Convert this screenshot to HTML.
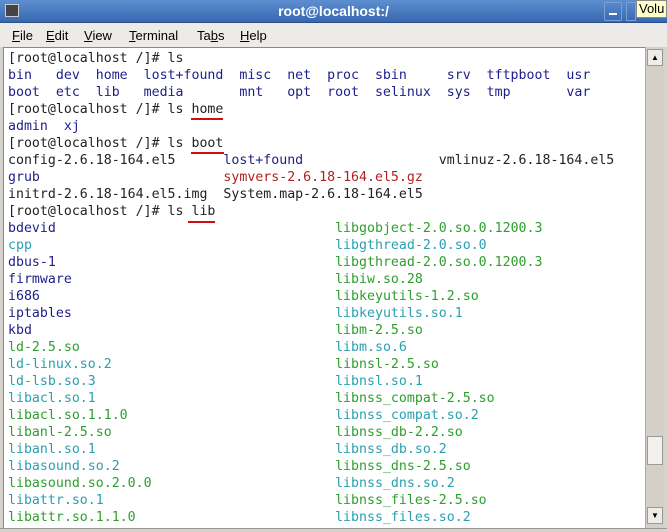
<!DOCTYPE html>
<html><head><meta charset="utf-8"><style>
*{margin:0;padding:0;box-sizing:border-box}
body{width:667px;height:532px;overflow:hidden;background:#d6d3ce;position:relative;font-family:"Liberation Sans",sans-serif}
#title{position:absolute;left:0;top:0;width:667px;height:23px;background:linear-gradient(#5d8fd0,#3767b0);border-bottom:1px solid #2a4f8a}
#title .t{position:absolute;left:0;right:0;top:3px;text-align:center;color:#fff;font-weight:bold;font-size:14px}
#menu{position:absolute;left:0;top:23px;width:667px;height:24px;background:#edebe7;font-size:13px;color:#000}
#menu span{position:absolute;top:5px}
#term{position:absolute;left:3px;top:47px;width:642px;height:481px;background:#fff;border-left:1px solid #888;border-top:1px solid #888}
.l{position:absolute;left:4px;height:17px;line-height:17px;font-family:"DejaVu Sans Mono",monospace;font-size:13.25px;white-space:pre;color:#222}
.b{color:#1e1e8a}.c{color:#2aa0b0}.g{color:#2e9e2e}.r{color:#b02020}
.u{position:absolute;height:2px;background:#d01010}
#sb{position:absolute;left:645px;top:47px;width:19px;height:481px;background:#d4d0c8;border-left:1px solid #aaa}
#bot{position:absolute;left:0;top:528px;width:667px;height:4px;background:#d6d3ce;border-top:1px solid #999}
</style></head><body>
<div id="title">
<div style="position:absolute;left:5px;top:4px;width:14px;height:13px;background:#444;border:1px solid #ccc"></div>
<div class="t">root@localhost:/</div>
<div style="position:absolute;left:604px;top:2px;width:18px;height:19px;border:1px solid #7aa0d8;border-radius:2px"></div>
<div style="position:absolute;left:609px;top:13px;width:8px;height:2px;background:#fff"></div>
<div style="position:absolute;left:626px;top:2px;width:10px;height:19px;border:1px solid #7aa0d8"></div>
<div style="position:absolute;left:636px;top:0;width:31px;height:18px;background:#ffffc8;border:1px solid #888;font-size:13px;padding-left:2px;line-height:16px">Volu</div>
</div>
<div id="menu">
<span style="left:12px"><u>F</u>ile</span><span style="left:46px"><u>E</u>dit</span><span style="left:84px"><u>V</u>iew</span><span style="left:129px"><u>T</u>erminal</span><span style="left:197px">Ta<u>b</u>s</span><span style="left:240px"><u>H</u>elp</span>
</div>
<div id="term">
<div class="l" style="top:2px">[root@localhost /]# ls</div>
<div class="l b" style="top:19px">bin   dev  home  lost+found  misc  net  proc  sbin     srv  tftpboot  usr</div>
<div class="l b" style="top:36px">boot  etc  lib   media       mnt   opt  root  selinux  sys  tmp       var</div>
<div class="l" style="top:53px">[root@localhost /]# ls home</div>
<div class="l b" style="top:70px">admin  xj</div>
<div class="l" style="top:87px">[root@localhost /]# ls boot</div>
<div class="l" style="top:104px">config-2.6.18-164.el5      <span class="b">lost+found</span>                 vmlinuz-2.6.18-164.el5</div>
<div class="l" style="top:121px"><span class="b">grub</span>                       <span class="r">symvers-2.6.18-164.el5.gz</span></div>
<div class="l" style="top:138px">initrd-2.6.18-164.el5.img  System.map-2.6.18-164.el5</div>
<div class="l" style="top:155px">[root@localhost /]# ls lib</div>
<div class="l" style="top:172px"><span class="b">bdevid</span>                                   <span class="g">libgobject-2.0.so.0.1200.3</span></div>
<div class="l" style="top:189px"><span class="c">cpp</span>                                      <span class="c">libgthread-2.0.so.0</span></div>
<div class="l" style="top:206px"><span class="b">dbus-1</span>                                   <span class="g">libgthread-2.0.so.0.1200.3</span></div>
<div class="l" style="top:223px"><span class="b">firmware</span>                                 <span class="g">libiw.so.28</span></div>
<div class="l" style="top:240px"><span class="b">i686</span>                                     <span class="g">libkeyutils-1.2.so</span></div>
<div class="l" style="top:257px"><span class="b">iptables</span>                                 <span class="c">libkeyutils.so.1</span></div>
<div class="l" style="top:274px"><span class="b">kbd</span>                                      <span class="g">libm-2.5.so</span></div>
<div class="l" style="top:291px"><span class="g">ld-2.5.so</span>                                <span class="c">libm.so.6</span></div>
<div class="l" style="top:308px"><span class="c">ld-linux.so.2</span>                            <span class="g">libnsl-2.5.so</span></div>
<div class="l" style="top:325px"><span class="c">ld-lsb.so.3</span>                              <span class="c">libnsl.so.1</span></div>
<div class="l" style="top:342px"><span class="c">libacl.so.1</span>                              <span class="g">libnss_compat-2.5.so</span></div>
<div class="l" style="top:359px"><span class="g">libacl.so.1.1.0</span>                          <span class="c">libnss_compat.so.2</span></div>
<div class="l" style="top:376px"><span class="g">libanl-2.5.so</span>                            <span class="g">libnss_db-2.2.so</span></div>
<div class="l" style="top:393px"><span class="c">libanl.so.1</span>                              <span class="c">libnss_db.so.2</span></div>
<div class="l" style="top:410px"><span class="c">libasound.so.2</span>                           <span class="g">libnss_dns-2.5.so</span></div>
<div class="l" style="top:427px"><span class="g">libasound.so.2.0.0</span>                       <span class="c">libnss_dns.so.2</span></div>
<div class="l" style="top:444px"><span class="c">libattr.so.1</span>                             <span class="g">libnss_files-2.5.so</span></div>
<div class="l" style="top:461px"><span class="g">libattr.so.1.1.0</span>                         <span class="c">libnss_files.so.2</span></div>
<div class="u" style="left:187px;top:70px;width:32px"></div>
<div class="u" style="left:187px;top:104px;width:33px"></div>
<div class="u" style="left:184px;top:173px;width:27px"></div>
</div>
<div id="sb">
<div style="position:absolute;left:1px;top:2px;width:16px;height:17px;background:#eeece8;border:1px solid #999;font-size:8px;text-align:center;line-height:15px">▲</div>
<div style="position:absolute;left:1px;top:389px;width:16px;height:29px;background:#f2f0ec;border:1px solid #999"></div>
<div style="position:absolute;left:1px;top:460px;width:16px;height:17px;background:#eeece8;border:1px solid #999;font-size:8px;text-align:center;line-height:15px">▼</div>
</div>
<div id="bot"></div>
</body></html>
